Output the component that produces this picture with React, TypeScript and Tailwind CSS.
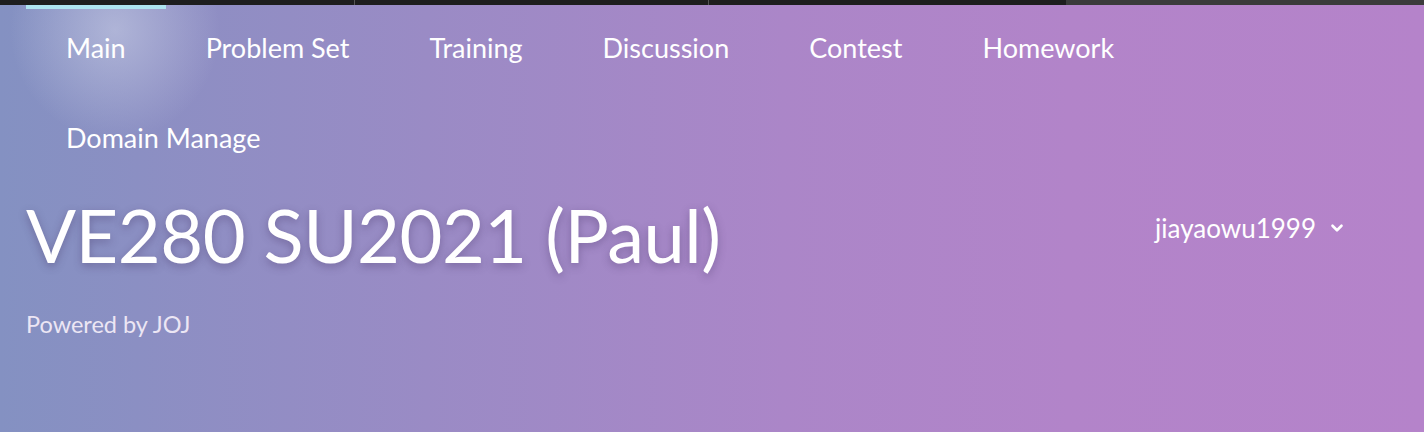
import { ChevronDown } from "lucide-react";

const navItems = [
  "Main",
  "Problem Set",
  "Training",
  "Discussion",
  "Contest",
  "Homework",
  "Domain Manage",
];

const NavItem = ({ label, active }: { label: string; active?: boolean }) => {
  return (
    <li className="relative flex h-[90px] items-center px-10 pb-[4px] text-[27px] text-white">
      {active && (
        <span className="absolute top-0 right-0 left-0 h-[4px] bg-[#aee4f0]" />
      )}
      {label}
    </li>
  );
};

const App = () => {
  return (
    <div
      className="relative h-[432px] w-full overflow-hidden bg-[linear-gradient(90deg,#8491c2_0%,#9a8bc5_30%,#ab86c8_55%,#b284c9_75%,#b583ca_100%)]"
      style={{ fontFamily: "Lato, 'Open Sans', sans-serif" }}
    >
      <div className="pointer-events-none absolute top-[-80px] left-[10px] h-[220px] w-[210px] rounded-full bg-[radial-gradient(closest-side,rgba(220,225,240,0.45),rgba(220,225,240,0))]" />

      <div className="relative flex h-[5px]">
        <div className="w-[354px] bg-[#1e1e1e]" />
        <div className="w-px bg-[#555]" />
        <div className="w-[353px] bg-[#1e1e1e]" />
        <div className="w-px bg-[#555]" />
        <div className="w-[357px] bg-[#1e1e1e]" />
        <div className="flex-1 bg-[#3b3b3b]" />
      </div>

      <ul className="relative flex flex-wrap pr-[60px] pl-[26px]">
        {navItems.map((item, i) => (
          <NavItem key={item} label={item} active={i === 0} />
        ))}
      </ul>

      <div className="relative mt-[13px] flex items-center justify-between pr-[78px] pl-[26px]">
        <h1 className="text-[74px] leading-none tracking-[-0.5px] text-white [text-shadow:0_3px_8px_rgba(60,40,90,0.35)]">
          VE280 SU2021 (Paul)
        </h1>
        <div className="mb-[14px] flex items-center gap-3 text-[26px] text-white">
          <span>jiayaowu1999</span>
          <ChevronDown size={18} strokeWidth={3.5} />
        </div>
      </div>

      <p className="relative mt-[35px] pl-[26px] text-[23.5px] text-[#ece6f4]">
        Powered by JOJ
      </p>
    </div>
  );
};

export default App;
